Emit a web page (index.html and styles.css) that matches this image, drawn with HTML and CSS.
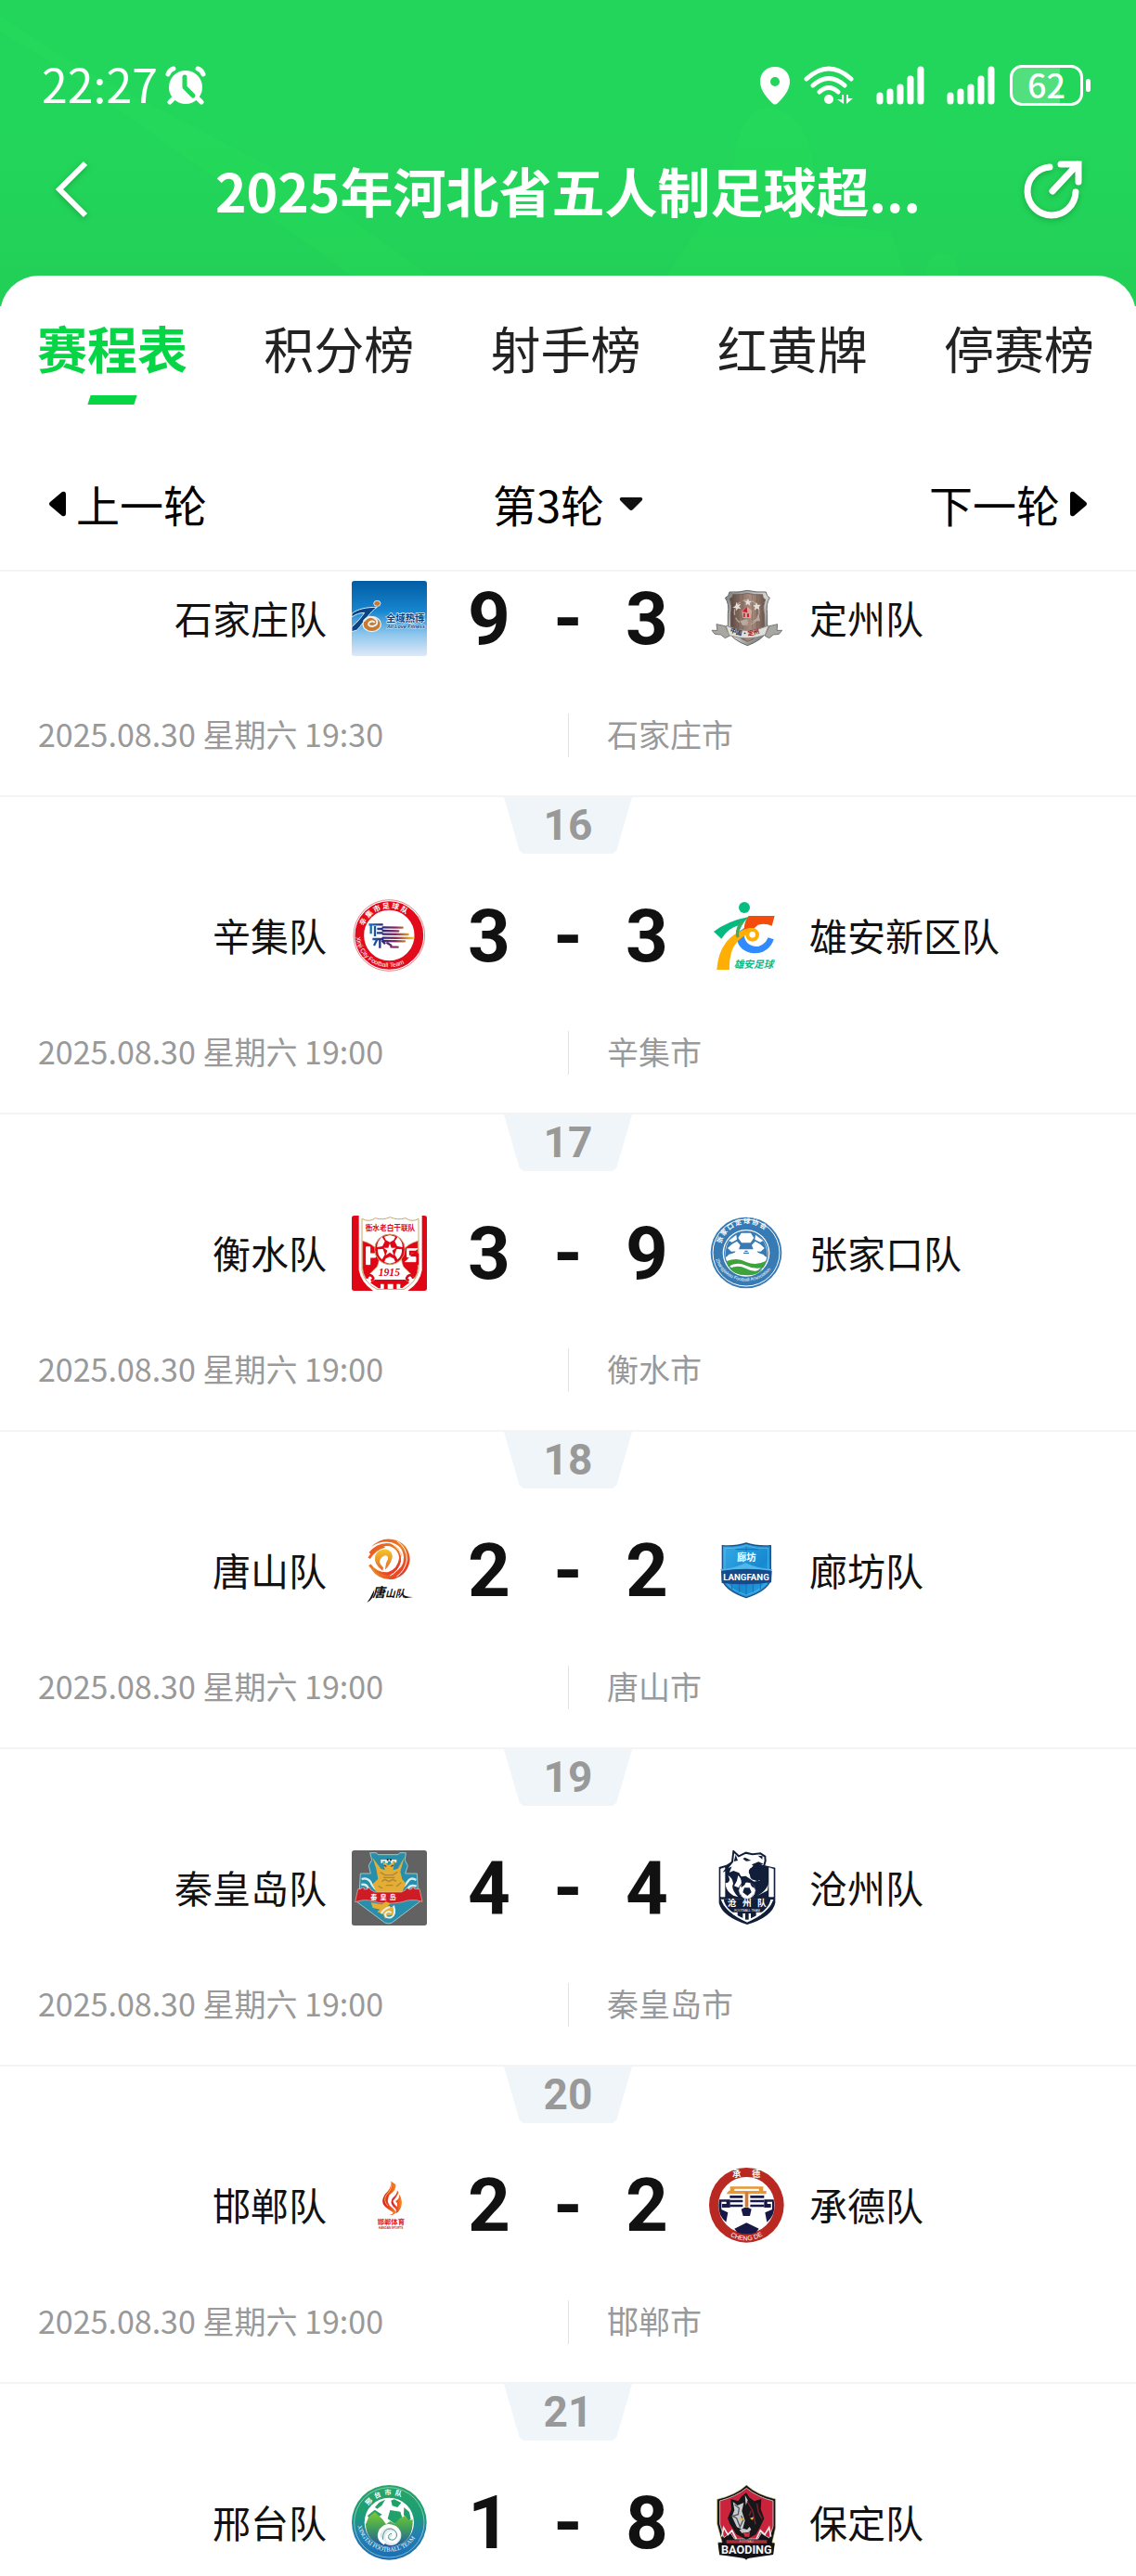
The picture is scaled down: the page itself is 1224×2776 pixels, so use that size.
FILE: index.html
```html
<!DOCTYPE html>
<html lang="zh-CN">
<head>
    <meta charset="UTF-8">
    <meta name="viewport" content="width=device-width, initial-scale=1.0">
    <title>2025年河北省五人制足球超级联赛</title>
    <link rel="stylesheet" href="styles.css">
</head>
<body>
    <div class="app">
        <header class="header">
            <svg class="header-art" viewBox="0 0 1224 340" preserveAspectRatio="xMidYMin slice" aria-hidden="true">
                <path d="M0 18L90 75 330 200 520 340H440L250 205 60 70 0 34Z"/>
                <path d="M790 190Q792 120 828 115 872 122 878 190L872 240 960 250 990 340H690L750 250Z"/>
                <circle cx="1015" cy="290" r="17"/>
            </svg>
            <div class="status-bar">
                <div class="status-left">
                    <span class="time">22:27</span>
                    <svg width="44" height="42" viewBox="0 0 44 42" aria-label="闹钟">
                        <circle cx="22" cy="23" r="18" fill="#fff"/>
                        <path d="M3 9Q5 4 9 3M41 9Q39 4 35 3M9 35L5 39M35 35L39 39" stroke="#fff" stroke-width="5" stroke-linecap="round" fill="none"/>
                        <path d="M21 12V23L30 32" stroke="#23d55b" stroke-width="5" stroke-linecap="round" stroke-linejoin="round" fill="none"/>
                    </svg>
                </div>
                <div class="status-right">
                    <svg width="34" height="42" viewBox="0 0 34 42" aria-label="定位">
                        <path fill="#fff" fill-rule="evenodd" d="M17 1C7 1 1 8 1 17 1 26 8 34 14 40Q17 43 20 40C26 34 33 26 33 17 33 8 27 1 17 1ZM17 12A5 5 0 1 1 17 22 5 5 0 0 1 17 12Z"/>
                    </svg>
                    <svg class="wifi" width="54" height="42" viewBox="0 0 54 42" aria-label="无线网络">
                        <g fill="none" stroke="#fff" stroke-width="5" stroke-linecap="round">
                            <path d="M3 14Q27-8 51 14M10 21Q27 6 44 21M17 28Q27 19 37 28"/>
                        </g>
                        <circle cx="27" cy="36" r="5" fill="#fff"/>
                        <path d="M43 31V41L36 36H41V31ZM46 41V31H48V35H53Z" fill="#fff"/>
                    </svg>
                    <svg class="signal" width="52" height="42" viewBox="0 0 52 42" aria-label="信号">
                        <path d="M4 32V38M15 28V38M26 23V38M37 14V38M48 4V38" stroke="#fff" stroke-width="7" stroke-linecap="round"/>
                    </svg>
                    <svg class="signal" width="52" height="42" viewBox="0 0 52 42" aria-label="信号">
                        <path d="M4 32V38M15 28V38M26 23V38M37 14V38M48 4V38" stroke="#fff" stroke-width="7" stroke-linecap="round"/>
                    </svg>
                    <div class="battery"><span>62</span></div>
                </div>
            </div>
            <div class="title-bar">
                <button class="icon-button" type="button" aria-label="返回">
                    <svg width="38" height="64" viewBox="0 0 38 64">
                        <path d="M34 4L6 32 34 60" fill="none" stroke="#fff" stroke-width="6"/>
                    </svg>
                </button>
                <h1>2025年河北省五人制足球超...</h1>
                <button class="icon-button" type="button" aria-label="分享">
                    <svg width="64" height="64" viewBox="0 0 64 64" fill="none" stroke="#fff" stroke-width="7" stroke-linecap="round">
                        <path d="M29 8A26 26 0 1 0 57 35"/>
                        <path d="M32 34L59 5M41 5H60V24"/>
                    </svg>
                </button>
            </div>
        </header>

        <main class="panel">
            <nav class="tabs">
                <a class="tab active" href="#schedule">赛程表</a>
                <a class="tab" href="#standings">积分榜</a>
                <a class="tab" href="#scorers">射手榜</a>
                <a class="tab" href="#cards">红黄牌</a>
                <a class="tab" href="#suspensions">停赛榜</a>
            </nav>

            <div class="rounds">
                <button class="round-button" type="button">
                    <svg width="20" height="28" viewBox="0 0 20 28"><path d="M2 12L15 1Q19 0 19 4V24Q19 28 15 27L2 16Q0 14 2 12Z"/></svg>
                    上一轮
                </button>
                <div class="round-picker">
                    <select aria-label="轮次">
                        <option>第1轮</option>
                        <option>第2轮</option>
                        <option selected>第3轮</option>
                    </select>
                    <svg width="26" height="16" viewBox="0 0 26 16"><path d="M2 1H24Q26 2 25 4L15 14Q13 16 11 14L1 4Q0 2 2 1Z" fill="#111"/></svg>
                </div>
                <button class="round-button next" type="button">
                    下一轮
                    <svg width="20" height="28" viewBox="0 0 20 28"><path d="M18 12L5 1Q1 0 1 4V24Q1 28 5 27L18 16Q20 14 18 12Z"/></svg>
                </button>
            </div>

            <ul class="match-list">
                <li class="match first">
                    <div class="teams">
                        <div class="team home">
                            <span>石家庄队</span>
                            <svg class="logo" viewBox="57 48 243 243">
                                <defs>
                                    <linearGradient id="sky" x2="0" y2="1">
                                        <stop offset="0" stop-color="#025da3"/>
                                        <stop offset=".4" stop-color="#1785cf"/>
                                        <stop offset=".7" stop-color="#8ac5ec"/>
                                        <stop offset="1" stop-color="#dfe9f8"/>
                                    </linearGradient>
                                </defs>
                                <rect x="57" y="48" width="243" height="243" rx="8" fill="url(#sky)"/>
                                <path d="M57 154C76 138 105 133 139 133 116 147 98 180 74 207L57 212V197C76 181 90 163 98 151 83 151 69 156 57 165Z" fill="#0b4587" stroke="#d6ecfa" stroke-width="3"/>
                                <ellipse cx="122" cy="188" rx="29" ry="24" fill="#c67b34" stroke="#e9f0f4" stroke-width="4"/>
                                <path d="M96 178Q116 153 137 174 145 190 124 195 105 193 114 182 126 174 131 183" fill="none" stroke="#eef1f0" stroke-width="6"/>
                                <ellipse cx="139" cy="121" rx="11" ry="9" fill="#c67b34" stroke="#d6ecfa" stroke-width="3"/>
                                <text x="168" y="181" font-size="31" font-weight="bold" fill="#0d3f7c" stroke="#d6ecfa" stroke-width="4" paint-order="stroke">全域热博</text>
                                <text class="latin" x="171" y="202" font-size="16" font-style="italic" font-weight="bold" fill="#0d3f7c" stroke="#d6ecfa" stroke-width="3" paint-order="stroke">All Love Fitness</text>
                            </svg>
                        </div>
                        <div class="score"><b>9</b><i>-</i><b>3</b></div>
                        <div class="team away">
                            <svg class="logo" viewBox="42 48 243 243">
                                <defs>
                                    <linearGradient id="wood">
                                        <stop offset="0" stop-color="#56443d"/>
                                        <stop offset=".3" stop-color="#8a7064"/>
                                        <stop offset=".6" stop-color="#ab9080"/>
                                        <stop offset="1" stop-color="#685248"/>
                                    </linearGradient>
                                    <linearGradient id="steel" x2="1" y2="1">
                                        <stop offset="0" stop-color="#777"/>
                                        <stop offset=".5" stop-color="#d7d7d4"/>
                                        <stop offset="1" stop-color="#555"/>
                                    </linearGradient>
                                </defs>
                                <path d="M94 103Q107 98 108 84 139 86 166 79 195 86 226 84 227 98 238 103 225 121 230 155V210Q213 240 166 257 118 239 103 210V155Q108 121 94 103Z" fill="url(#steel)" stroke="#666" stroke-width="3"/>
                                <path d="M109 105Q120 102 119 92 145 94 166 88 190 94 215 92 214 104 224 108 214 130 220 157V203Q205 228 166 244 128 229 112 203V157Q118 130 109 105Z" fill="url(#wood)" stroke="#5c5350" stroke-width="2"/>
                                <path d="M137 93V232M151 90V238M181 91V237M197 94V231" stroke="#66534a" stroke-width="2" opacity=".6"/>
                                <circle cx="164" cy="150" r="40" fill="none" stroke="#b3a59c" stroke-width="4" stroke-dasharray="20 9"/>
                                <path d="M131 116L135 125 145 122 139 131 145 138 135 137 130 145 128 136 118 134 127 129ZM168 105L171 113 180 114 173 120 175 128 167 123 160 127 162 119 156 113 164 113ZM195 117L199 125 209 125 203 133 205 141 197 137 189 143 190 133 184 127 192 126Z" fill="#e4dfda"/>
                                <path d="M142 177L151 193 169 185 165 171ZM179 180L194 171 202 153 207 177Z" fill="#b5a9a1"/>
                                <path d="M148 144L165 132 181 144 177 168H151Z" fill="#d3a59b"/>
                                <path d="M149 147L164 132 166 151ZM153 165V152H158V165ZM165 165V154H171V165Z" fill="#c52238"/>
                                <path d="M51 208H69L66 188 94 194 109 225 94 233 80 222 61 220ZM278 208H261L263 188 237 194 222 225 236 233 250 222 268 220Z" fill="#a8a7a4" stroke="#757573" stroke-width="3"/>
                                <path d="M96 192Q164 225 235 192L223 223Q166 243 107 224Z" fill="#e0dfdc" stroke="#8e8d8a" stroke-width="3"/>
                                <path id="dz" d="M109 213Q165 238 220 211" fill="none"/>
                                <text font-size="20" font-weight="bold" fill="#303039"><textPath href="#dz">中国·<tspan fill="#92151e">定州</tspan></textPath></text>
                            </svg>
                            <span>定州队</span>
                        </div>
                    </div>
                    <div class="info"><time>2025.08.30 星期六 19:30</time><span class="place">石家庄市</span></div>
                </li>

                <li class="match">
                    <div class="number">16</div>
                    <div class="teams">
                        <div class="team home">
                            <span>辛集队</span>
                            <svg class="logo" viewBox="57 54 243 243">
                                <defs>
                                    <linearGradient id="speed" gradientUnits="userSpaceOnUse" x1="112" x2="257">
                                        <stop offset="0" stop-color="#1677bf"/>
                                        <stop offset=".3" stop-color="#292a79"/>
                                        <stop offset=".6" stop-color="#8a2861"/>
                                        <stop offset="1" stop-color="#f6cf1a"/>
                                    </linearGradient>
                                </defs>
                                <circle cx="178" cy="174" r="115" fill="#fff" stroke="#e5434c" stroke-width="2"/>
                                <circle cx="178" cy="174" r="96" fill="none" stroke="#e20b1c" stroke-width="29"/>
                                <path id="xjTop" d="M97 144A86 86 0 0 1 261 149" fill="none"/>
                                <path id="xjBottom" d="M71 180A107 107 0 0 0 284 180" fill="none"/>
                                <text font-size="23" font-weight="bold" fill="#fff"><textPath href="#xjTop">辛 集 市 足 球 队</textPath></text>
                                <text class="latin" font-size="20" fill="#fff"><textPath href="#xjBottom">Xinji City Football Team</textPath></text>
                                <g fill="none" stroke="url(#speed)" stroke-width="7">
                                    <path d="M112 139H158M119 139V169M132 144V177M139 153H158M138 166H158M124 186H160M139 187L129 207M148 187V215M155 191L165 202"/>
                                    <path d="M158 148L221 149M158 159L208 160M158 170L239 171M158 182L256 183M158 192L228 193M172 199L184 206M184 211L206 212" stroke-linecap="round"/>
                                </g>
                            </svg>
                        </div>
                        <div class="score"><b>3</b><i>-</i><b>3</b></div>
                        <div class="team away">
                            <svg class="logo" viewBox="1212 54 243 243">
                                <circle cx="1326" cy="84" r="18" fill="#08bd82"/>
                                <path d="M1303 165Q1296 196 1318 217 1346 240 1384 228 1413 214 1421 187L1403 181Q1395 202 1371 210 1341 211 1329 189 1320 166 1334 145Z" fill="#318bff"/>
                                <path d="M1340 111H1424L1415 143Q1393 133 1370 140 1346 158 1347 175 1328 174 1325 154 1326 128 1340 111Z" fill="#f44c0d"/>
                                <path d="M1237 285Q1243 198 1305 165 1330 150 1350 150L1347 166Q1307 180 1289 216 1276 247 1278 285Z" fill="#ffae04"/>
                                <circle cx="1352" cy="172" r="16" fill="#fff" stroke="#ffae04" stroke-width="12"/>
                                <path d="M1227 162Q1270 128 1340 114 1311 142 1303 182 1290 163 1312 140 1272 150 1252 185Z" fill="#06b981"/>
                                <path d="M1305 180Q1299 150 1319 130" fill="none" stroke="#45aa60" stroke-width="9"/>
                                <text x="1292" y="278" font-size="32" font-style="italic" font-weight="bold" fill="#0eb781">雄安足球</text>
                            </svg>
                            <span>雄安新区队</span>
                        </div>
                    </div>
                    <div class="info"><time>2025.08.30 星期六 19:00</time><span class="place">辛集市</span></div>
                </li>

                <li class="match">
                    <div class="number">17</div>
                    <div class="teams">
                        <div class="team home">
                            <span>衡水队</span>
                            <svg class="logo" viewBox="57 60 243 243">
                                <rect x="57" y="60" width="243" height="243" rx="8" fill="#df0715"/>
                                <path d="M80 60H284V236Q278 276 238 303H126Q87 276 80 236Z" fill="#fff"/>
                                <path d="M90 70Q113 83 133 68 156 76 181 65 206 76 231 68 252 83 273 70V238Q263 278 226 298H138Q99 278 90 238Z" fill="#fff" stroke="#c9a76d" stroke-width="3"/>
                                <path d="M92 142Q124 150 142 174 150 200 139 225L102 262Q92 245 92 229ZM271 142Q239 150 221 174 213 200 224 225L261 262Q271 245 271 229Z" fill="#df0715" stroke="#c9a76d" stroke-width="2"/>
                                <path d="M104 161H116V183H134V195H116V218H104ZM270 167H236V194H264V209H229" fill="#fff" stroke="#fff" stroke-width="3"/>
                                <path d="M265 177H246V185H270V219" stroke="#df0715" stroke-width="7" fill="none"/>
                                <circle cx="180" cy="169" r="49" fill="#df0715" stroke="#c9a76d" stroke-width="3"/>
                                <g fill="#fff">
                                    <path d="M180 123L198 128 193 139 180 146 167 139 162 128ZM180 215L198 210 193 199 180 193 167 199 162 210Z"/>
                                    <path d="M155 129L164 143 156 159 139 162Q138 143 155 129ZM205 129L196 143 204 159 221 162Q222 143 205 129ZM141 169L158 168 164 186 155 202Q139 189 141 169ZM219 169L202 168 196 186 205 202Q221 189 219 169Z"/>
                                    <path d="M180 150L185 164H200L188 173 193 188 180 179 167 188 172 173 160 164H175Z"/>
                                </g>
                                <text x="101" y="109" font-size="23" font-weight="bold" fill="#d80b18">衡水老白干联队</text>
                                <text class="serif" x="143" y="256" font-size="35" font-style="italic" font-weight="bold" fill="#df0715">1915</text>
                                <path d="M105 263Q112 246 123 256 132 266 119 270M256 263Q249 246 238 256 229 266 242 270" fill="none" stroke="#df0715" stroke-width="8"/>
                                <path d="M117 277L132 267H230L243 277 220 294H214V281H202V297H191V281H173V297H161V281H150V295H143Z" fill="#df0715"/>
                            </svg>
                        </div>
                        <div class="score"><b>3</b><i>-</i><b>9</b></div>
                        <div class="team away">
                            <svg class="logo" viewBox="1212 60 243 243">
                                <circle cx="1332" cy="180" r="115" fill="#387bb4"/>
                                <circle cx="1332" cy="180" r="108" fill="none" stroke="#fff" stroke-width="3"/>
                                <circle cx="1332" cy="181" r="76" fill="#fff"/>
                                <circle cx="1332" cy="181" r="70" fill="#fff" stroke="#387bb4" stroke-width="4"/>
                                <path d="M1265 195Q1262 137 1307 116L1316 111H1348L1357 116Q1402 137 1399 195 1383 183 1359 179H1304Q1281 183 1265 195Z" fill="#387bb4"/>
                                <path d="M1316 116H1347L1357 132 1346 148H1317L1306 132ZM1300 122L1302 137 1286 146 1276 141ZM1362 122L1360 137 1377 146 1387 141ZM1285 153L1302 143 1313 155 1306 175 1284 176 1272 165ZM1378 153L1361 143 1350 155 1357 175 1379 176 1391 165Z" fill="#fff"/>
                                <path d="M1275 186L1295 180 1300 169H1364L1370 180 1388 186 1398 202H1266Z" fill="#fff"/>
                                <path d="M1323 181H1341M1327 175H1337" stroke="#387bb4" stroke-width="4"/>
                                <path d="M1269 207Q1304 194 1332 210 1364 223 1395 207 1393 221 1388 227 1361 236 1331 221 1302 207 1274 225ZM1278 231Q1306 218 1331 231 1358 246 1384 234 1364 256 1333 252 1297 254 1278 231Z" fill="#3da43c"/>
                                <path id="zjkTop" d="M1251 151A86 86 0 0 1 1418 151" fill="none"/>
                                <path id="zjkBottom" d="M1234 202A103 103 0 0 0 1429 202" fill="none"/>
                                <text font-size="21" font-weight="bold" fill="#fff"><textPath href="#zjkTop">张 家 口 足 球 协 会</textPath></text>
                                <text class="latin" font-size="15" fill="#fff"><textPath href="#zjkBottom">Zhangjiakou Football Association</textPath></text>
                            </svg>
                            <span>张家口队</span>
                        </div>
                    </div>
                    <div class="info"><time>2025.08.30 星期六 19:00</time><span class="place">衡水市</span></div>
                </li>

                <li class="match">
                    <div class="number">18</div>
                    <div class="teams">
                        <div class="team home">
                            <span>唐山队</span>
                            <svg class="logo" viewBox="57 66 243 243">
                                <defs>
                                    <linearGradient id="phoenix" x2="1" y2="1">
                                        <stop offset="0" stop-color="#e94b22"/>
                                        <stop offset=".5" stop-color="#e98223"/>
                                        <stop offset="1" stop-color="#e5192a"/>
                                    </linearGradient>
                                    <linearGradient id="sun" x2="0" y2="1">
                                        <stop offset="0" stop-color="#f7c526"/>
                                        <stop offset="1" stop-color="#df6734"/>
                                    </linearGradient>
                                </defs>
                                <path d="M119 112Q156 74 203 90 244 108 245 153 239 201 193 215 146 221 119 182 154 210 191 195 226 180 225 145 222 105 183 96 147 90 119 112Z" fill="url(#phoenix)"/>
                                <path d="M116 132Q143 99 180 104 212 115 215 147 209 187 175 197 137 200 115 169M113 148Q131 117 163 109" fill="none" stroke="url(#phoenix)" stroke-width="9"/>
                                <path d="M157 188Q126 166 133 138 144 116 171 119 190 126 188 145 184 165 165 185 166 164 174 151 176 139 164 139 148 145 147 160 149 170 159 178Z" fill="url(#sun)"/>
                                <path d="M203 92Q236 113 235 153 230 187 202 207M185 99Q221 122 218 157 210 190 181 204" fill="none" stroke="#fff" stroke-width="3"/>
                                <text class="serif" x="123" y="274" font-size="42" font-style="italic" font-weight="bold" fill="#111">唐<tspan font-size="32">山</tspan><tspan font-size="32">队</tspan></text>
                                <path d="M130 249Q129 279 106 291L116 277ZM216 262Q231 274 256 273L230 277Z" fill="#111"/>
                            </svg>
                        </div>
                        <div class="score"><b>2</b><i>-</i><b>2</b></div>
                        <div class="team away">
                            <svg class="logo" viewBox="1212 66 243 243">
                                <defs>
                                    <linearGradient id="langfang" x2="1" y2="1">
                                        <stop offset="0" stop-color="#37abe7"/>
                                        <stop offset=".6" stop-color="#1789d0"/>
                                        <stop offset="1" stop-color="#31a9e7"/>
                                    </linearGradient>
                                </defs>
                                <path d="M1255 107Q1298 110 1332 99 1366 110 1411 107V219Q1396 254 1332 275 1269 254 1255 219Z" fill="url(#langfang)" stroke="#1e508b" stroke-width="4"/>
                                <path d="M1263 115Q1301 118 1332 107 1365 118 1403 115V217Q1388 249 1332 267 1276 249 1263 217Z" fill="none" stroke="#65c5ef" stroke-width="2"/>
                                <path d="M1298 119H1371M1332 110V125M1286 226V248M1310 230V257M1332 230V266M1354 230V257M1378 226V248" stroke="#1870ad" stroke-width="3"/>
                                <path d="M1248 183Q1292 182 1330 163 1371 182 1417 184L1408 194Q1332 178 1257 193Z" fill="#50b8e9"/>
                                <path d="M1251 188Q1332 176 1415 188L1413 226Q1332 237 1253 228Z" fill="#154a8c"/>
                                <text x="1302" y="157" font-size="31" font-weight="bold" fill="#fff">廊坊</text>
                                <text class="digits" x="1332" y="219" font-size="29" font-weight="bold" text-anchor="middle" fill="#fff">LANGFANG</text>
                            </svg>
                            <span>廊坊队</span>
                        </div>
                    </div>
                    <div class="info"><time>2025.08.30 星期六 19:00</time><span class="place">唐山市</span></div>
                </li>

                <li class="match">
                    <div class="number">19</div>
                    <div class="teams">
                        <div class="team home">
                            <span>秦皇岛队</span>
                            <svg class="logo" viewBox="57 57 243 243">
                                <rect x="57" y="57" width="243" height="243" rx="8" fill="#626262"/>
                                <path d="M116 65H137L141 71H207L212 65H232L229 89 238 107 230 132H268L271 185 278 222 187 291Q176 297 164 291L73 223 82 184 85 132H118L112 106 122 88Z" fill="#278eac" stroke="#9fc6c5" stroke-width="3"/>
                                <path d="M89 150Q106 144 117 158 124 176 143 190M265 153Q247 141 236 161 226 177 202 188M88 168Q106 164 112 184M266 173Q244 165 235 187" stroke="#d6ecef" fill="none" stroke-width="7"/>
                                <path d="M124 80L151 116 164 121 158 93 176 105 195 92 191 121 206 116 227 79 214 126 220 150 232 164 220 193H137L125 166 142 149 136 116Z" fill="#e4ad33"/>
                                <path d="M151 87H202V97H196V92H190V98H183V92H174V98H165V92H157V98H151Z" fill="#f1eee1"/>
                                <path d="M173 84V91M183 84V91" stroke="#222" stroke-width="5"/>
                                <path d="M149 128L164 137H190L205 127M159 145H196M154 157L165 151 177 158 190 151 201 157M167 170H190M143 173L157 180M201 174L217 161" stroke="#a8883e" stroke-width="4" fill="none"/>
                                <path d="M161 105L169 109M184 109L192 105" stroke="#444" stroke-width="4"/>
                                <path d="M77 182H87V178H97V183H107V179H117V184L131 192H218L231 185V180H241V183H250V178H260V182H276L285 223 266 218Q240 215 216 225 178 232 143 226 112 215 88 219L68 224Z" fill="#cd1c25" stroke="#ebb5aa" stroke-width="2"/>
                                <text x="118" y="217" font-size="21" font-weight="bold" fill="#fff">秦 &#160;皇 &#160;岛</text>
                                <path d="M119 226Q143 230 155 232L167 222 182 229 173 238 192 240 198 255Q191 270 174 267L165 278 158 263 139 256 148 248 125 243Z" fill="#e4ad33"/>
                                <path d="M192 236Q202 264 184 274 164 278 165 262 176 249 185 259M180 240Q157 248 153 262" fill="none" stroke="#e3f0ef" stroke-width="6"/>
                            </svg>
                        </div>
                        <div class="score"><b>4</b><i>-</i><b>4</b></div>
                        <div class="team away">
                            <svg class="logo" viewBox="1212 57 243 243">
                                <path d="M1244 111L1268 104 1289 91 1379 103 1426 113V227Q1416 272 1335 297 1254 270 1244 227Z" fill="#111e3a"/>
                                <path d="M1250 117L1263 113V207H1250ZM1406 113L1420 118V207H1406ZM1251 215Q1263 256 1335 289 1407 257 1419 216" fill="#fff" stroke="#fff" stroke-width="2"/>
                                <path d="M1259 215H1411Q1404 256 1335 281 1266 256 1259 215Z" fill="#111e3a"/>
                                <path d="M1291 60L1308 76 1331 65 1352 70 1378 67 1393 77 1394 91 1389 109 1378 105 1357 109 1344 122 1349 145 1375 151 1382 157 1356 161 1330 143 1314 145 1307 132 1291 126 1272 134 1280 115 1265 121 1287 94Z" fill="#fff" stroke="#111e3a" stroke-width="6"/>
                                <path d="M1298 71L1305 90 1292 93ZM1328 80L1348 90 1332 92 1321 84ZM1370 74L1385 76 1384 86ZM1350 103L1372 94 1388 101 1377 104 1357 109Z" fill="#111e3a"/>
                                <path d="M1346 114L1354 134 1374 140 1380 122 1386 126 1383 148 1369 157 1350 151 1340 127Z" fill="#111e3a"/>
                                <path d="M1265 163Q1265 188 1290 203L1306 208Q1281 180 1290 165 1288 146 1273 138 1286 160 1265 163ZM1293 172Q1304 157 1306 138 1324 156 1311 179ZM1404 157Q1404 184 1368 204L1401 187Z" fill="#fff"/>
                                <circle cx="1335" cy="187" r="28" fill="#fff" stroke="#111e3a" stroke-width="3"/>
                                <path d="M1326 178H1343L1349 193 1336 204 1321 193ZM1317 164L1331 160 1327 169 1315 178ZM1344 162L1355 168 1361 181 1350 174ZM1309 193L1316 201 1320 211ZM1359 193L1351 204 1347 212Z" fill="#111e3a"/>
                                <text x="1271" y="237" font-size="29" font-weight="bold" fill="#fff">沧</text>
                                <text x="1320" y="237" font-size="29" font-weight="bold" fill="#fff">州</text>
                                <text x="1368" y="237" font-size="29" font-weight="bold" fill="#fff">队</text>
                                <text class="latin" x="1335" y="255" font-size="10" text-anchor="middle" fill="#fff">FOOTBALL TEAM</text>
                                <path d="M1286 257H1304V271L1290 265ZM1321 261H1347V281L1335 285 1321 279ZM1364 257H1384L1380 265 1364 273Z" fill="#fff"/>
                                <path d="M1329 261H1340V281H1329Z" fill="#111e3a"/>
                            </svg>
                            <span>沧州队</span>
                        </div>
                    </div>
                    <div class="info"><time>2025.08.30 星期六 19:00</time><span class="place">秦皇岛市</span></div>
                </li>

                <li class="match">
                    <div class="number">20</div>
                    <div class="teams">
                        <div class="team home">
                            <span>邯郸队</span>
                            <svg class="logo" viewBox="57 63 243 243">
                                <defs>
                                    <linearGradient id="flame">
                                        <stop offset="0" stop-color="#d51a29"/>
                                        <stop offset=".6" stop-color="#ed5522"/>
                                        <stop offset="1" stop-color="#f89023"/>
                                    </linearGradient>
                                </defs>
                                <path d="M184 107Q187 128 164 149 149 174 164 188 174 197 190 207 193 213 178 216 195 217 201 206 193 195 180 186 168 171 179 151 203 134 199 117Z" fill="url(#flame)"/>
                                <path d="M204 136Q204 149 191 159 178 173 191 189 205 198 199 211 217 202 219 176 217 156 210 149 212 166 198 171 207 177 203 190 193 182 190 171 206 153 208 143Z" fill="url(#flame)"/>
                                <path d="M184 107Q191 130 169 151 157 170 174 186" fill="none" stroke="#f8bd28" stroke-width="3"/>
                                <text x="140" y="246" font-size="22" font-weight="bold" fill="#d91a22">邯郸体育</text>
                                <text class="latin" x="144" y="260" font-size="9" font-weight="bold" fill="#d91a22">HANDAN SPORTS</text>
                            </svg>
                        </div>
                        <div class="score"><b>2</b><i>-</i><b>2</b></div>
                        <div class="team away">
                            <svg class="logo" viewBox="1212 63 243 243">
                                <circle cx="1333" cy="184" r="121" fill="#b92922"/>
                                <circle cx="1333" cy="184" r="91" fill="#fff"/>
                                <path d="M1245 166H1280V192H1254V180H1268V173H1252V198L1273 208 1267 239Q1242 220 1243 184ZM1421 166H1390V192H1412V180H1400V173H1416V198L1393 208 1399 239Q1424 220 1423 184Z" fill="#181847"/>
                                <path d="M1316 197L1332 189 1349 197 1344 219H1322ZM1333 241L1373 260 1363 273Q1334 282 1304 273L1294 260Z" fill="#181847"/>
                                <path d="M1279 157H1390M1279 171H1390M1279 186H1390" stroke="#181847" stroke-width="8"/>
                                <path d="M1321 150H1345V192H1321Z" fill="#fff"/>
                                <path d="M1280 124H1387V138H1397V148H1268L1276 137H1280ZM1294 131V138H1373V131Z" fill="#e99733" fill-rule="evenodd"/>
                                <path d="M1328 142H1339V191H1328Z" fill="#d77930"/>
                                <text x="1288" y="93" font-size="27" font-weight="bold" fill="#fff">承</text>
                                <text x="1351" y="93" font-size="27" font-weight="bold" fill="#fff">德</text>
                                <path id="cdBottom" d="M1280 284Q1332 314 1386 282" fill="none"/>
                                <text class="latin" font-size="21" fill="#fff"><textPath href="#cdBottom">CHENG DE</textPath></text>
                            </svg>
                            <span>承德队</span>
                        </div>
                    </div>
                    <div class="info"><time>2025.08.30 星期六 19:00</time><span class="place">邯郸市</span></div>
                </li>

                <li class="match">
                    <div class="number">21</div>
                    <div class="teams">
                        <div class="team home">
                            <span>邢台队</span>
                            <svg class="logo" viewBox="57 354 243 243">
                                <defs>
                                    <linearGradient id="ring" x2="0" y2="1">
                                        <stop offset="0" stop-color="#29a567"/>
                                        <stop offset=".4" stop-color="#1b9d76"/>
                                        <stop offset=".65" stop-color="#2380b1"/>
                                        <stop offset="1" stop-color="#1b6eb2"/>
                                    </linearGradient>
                                    <linearGradient id="hill" x2="0" y2="1">
                                        <stop offset="0" stop-color="#82c735"/>
                                        <stop offset=".4" stop-color="#47a653"/>
                                        <stop offset="1" stop-color="#2056a3"/>
                                    </linearGradient>
                                </defs>
                                <circle cx="178" cy="475" r="121" fill="url(#ring)"/>
                                <circle cx="178" cy="475" r="113" fill="none" stroke="#b4ddd5" stroke-width="2"/>
                                <circle cx="178" cy="475" r="80" fill="#fff"/>
                                <path d="M184 404L194 400 217 411 205 426 188 421ZM181 435L214 440 222 465 196 479 173 463ZM132 425L146 410 165 401 154 420 139 431ZM155 449L131 434 108 453 119 474ZM226 426L243 441 248 464 238 472 225 450Z" fill="#20a16a"/>
                                <path d="M102 481L112 457 132 441 157 465 168 481 181 471 196 479 212 462 230 453 241 468 254 466Q256 529 211 547 178 563 143 546 103 527 102 481Z" fill="url(#hill)"/>
                                <circle cx="184" cy="516" r="33" fill="#e4ecee"/>
                                <path d="M164 543Q136 527 151 499 172 475 198 492 219 514 198 535 172 542 171 520 178 502 193 511 198 524 184 526" stroke="#fff" stroke-width="10" fill="none"/>
                                <path d="M157 530Q157 493 184 495 206 502 202 521 193 538 177 528 172 513 186 511" stroke="#55918b" stroke-width="3" fill="none"/>
                                <path id="xtTop" d="M111 421A86 86 0 0 1 251 421" fill="none"/>
                                <path id="xtBottom" d="M77 486A103 103 0 0 0 279 486" fill="none"/>
                                <text font-size="22" font-weight="bold" fill="#fff"><textPath href="#xtTop">邢&#160; 台&#160; 市&#160; 队</textPath></text>
                                <text class="serif" font-size="19" fill="#fff"><textPath href="#xtBottom">XINGTAI FOOTBALL TEAM</textPath></text>
                            </svg>
                        </div>
                        <div class="score"><b>1</b><i>-</i><b>8</b></div>
                        <div class="team away">
                            <svg class="logo" viewBox="1212 354 243 243">
                                <path d="M1333 354Q1368 386 1427 399V492L1416 540H1424L1419 578 1348 584 1332 596 1316 584 1246 580 1241 539H1254L1238 480V400Q1299 386 1333 354Z" fill="#121215" stroke="#ddd286" stroke-width="2"/>
                                <path d="M1333 364Q1371 394 1419 405V488L1406 525 1381 509 1370 528H1294L1281 508 1260 524 1247 480V405Q1300 391 1333 364Z" fill="#ca233b" stroke="#b9b9bb" stroke-width="3"/>
                                <path d="M1282 399L1306 406 1317 391 1332 379 1342 394 1358 406 1381 399 1379 431 1390 462 1376 492 1363 514 1333 530 1300 513 1279 479 1272 461 1284 433Z" fill="#17171a"/>
                                <path d="M1289 408L1304 420 1324 411 1318 438 1328 469 1320 498 1302 490 1286 456 1294 435ZM1328 386L1337 403 1331 419ZM1310 499L1323 495 1335 498 1343 489 1348 498 1339 507 1318 509Z" fill="#c8cbce"/>
                                <path d="M1295 417L1309 429 1306 449 1288 454 1301 461 1312 489 1322 467 1316 453" fill="none" stroke="#54565b" stroke-width="4"/>
                                <path d="M1307 460L1324 463 1318 470ZM1344 461L1358 456 1352 467Z" fill="#f2bf38"/>
                                <path d="M1336 408L1353 437 1362 481M1367 414L1371 440 1383 463M1348 437L1342 453" stroke="#84202d" stroke-width="4" fill="none"/>
                                <path d="M1321 506L1328 521H1342L1345 502 1336 511Z" fill="#cf3040"/>
                                <path d="M1253 521L1259 491 1273 514 1286 501 1300 528M1412 521L1406 491 1392 514 1378 501 1365 528" fill="none" stroke="#eee" stroke-width="5"/>
                                <path d="M1268 532H1399V542H1268Z" fill="#a82c39"/>
                                <text class="latin" x="1334" y="541" font-size="9" text-anchor="middle" fill="#f0b3b8">FOOTBALL</text>
                                <path d="M1241 543H1424L1419 579 1332 592 1246 579Z" fill="#111217"/>
                                <text class="digits" x="1333" y="577" font-size="38" font-weight="bold" text-anchor="middle" fill="#f4f5f9">BAODING</text>
                            </svg>
                            <span>保定队</span>
                        </div>
                    </div>
                </li>
            </ul>
        </main>
    </div>
</body>
</html>
```

FILE: styles.css
```css
* {
    box-sizing: border-box;
    margin: 0;
    padding: 0;
}

body {
    background-color: #fff;
    color: #111;
    font-family: "Noto Sans CJK SC", "Noto Sans", sans-serif;
}

button, select {
    border: none;
    background: none;
    color: inherit;
    font: inherit;
    cursor: pointer;
}

svg {
    display: block;
    flex: none;
}

.app {
    display: flex;
    flex-direction: column;
    height: 100vh;
    overflow: hidden;
}

/* Header */
.header {
    position: relative;
    flex: none;
    padding: 60px 50px 84px 45px;
    background: linear-gradient(#23d65b 0%, #22d65b 45%, #22cf57 100%);
    color: #fff;
}

.header-art {
    position: absolute;
    top: 0;
    left: 0;
    width: 100%;
    height: 100%;
    fill: rgba(40, 232, 88, 0.14);
}

.status-bar, .title-bar {
    position: relative;
    display: flex;
    align-items: center;
    justify-content: space-between;
}

.status-bar {
    height: 64px;
}

.status-left, .status-right {
    display: flex;
    align-items: center;
}

.status-left {
    gap: 8px;
}

.time {
    padding-bottom: 6px;
    font-size: 50px;
    line-height: 58px;
}

.wifi {
    margin-left: 14px;
}

.signal {
    margin-left: 24px;
}

.battery {
    position: relative;
    width: 79px;
    height: 44px;
    margin-left: 16px;
    margin-right: 7px;
    border: 3px solid #fff;
    border-radius: 13px;
    background: linear-gradient(to right, #52df7d 70%, transparent 70%);
    font-size: 36px;
    font-weight: 500;
    line-height: 34px;
    text-align: center;
}

.battery::after {
    content: "";
    position: absolute;
    top: 12px;
    right: -11px;
    width: 5px;
    height: 14px;
    border-radius: 3px;
    background-color: #fff;
}

.title-bar {
    height: 84px;
    margin-top: 38px;
    padding: 0 8px 0 13px;
}

.title-bar h1 {
    font-size: 57px;
    font-weight: bold;
    line-height: 84px;
}

.icon-button {
    width: 64px;
}

.icon-button svg {
    filter: drop-shadow(0 2px 3px rgba(0, 80, 20, 0.3));
}

/* White panel with tabs */
.panel {
    position: relative;
    display: flex;
    flex: 1;
    flex-direction: column;
    min-height: 0;
    margin-top: -33px;
    border-radius: 42px 42px 0 0;
    background-color: #fff;
}

.tabs {
    display: flex;
    justify-content: space-between;
    padding: 48px 45px 0 40px;
}

.tab {
    color: #222;
    font-size: 54px;
    line-height: 60px;
    text-decoration: none;
}

.tab::after {
    content: "";
    display: block;
    width: 50px;
    height: 10px;
    margin: 21px auto 0;
}

.tab.active {
    color: #06d645;
    font-weight: bold;
}

.tab.active::after {
    background-color: #06d645;
    transform: skewX(-18deg);
}

/* Round switcher */
.rounds {
    display: grid;
    grid-template-columns: 1fr auto 1fr;
    align-items: center;
    padding: 77px 52px 41px;
    color: #000;
    font-size: 47px;
    line-height: 60px;
}

.round-button, .round-picker {
    display: flex;
    align-items: center;
}

.round-button {
    gap: 10px;
    justify-self: start;
}

.round-button.next {
    justify-self: end;
}

.round-picker {
    gap: 15px;
}

.round-picker select {
    appearance: none;
}

/* Matches */
.match-list {
    flex: 1;
    min-height: 0;
    overflow: hidden;
    list-style: none;
}

.match {
    border-top: 2px solid #f4f4f5;
}

.match.first {
    padding-top: 10px;
}

.number {
    width: 138px;
    height: 61px;
    margin: 0 auto 48px;
    background-color: #eff5f8;
    clip-path: polygon(0 0, 100% 0, 88% 94%, 85% 100%, 15% 100%, 12% 94%);
    color: #999;
    font-family: Roboto, "Liberation Sans", sans-serif;
    font-size: 46px;
    font-weight: bold;
    line-height: 61px;
    text-align: center;
}

.teams {
    display: grid;
    grid-template-columns: 1fr 304px 1fr;
    align-items: center;
}

.team {
    display: flex;
    align-items: center;
    gap: 27px;
    font-size: 41px;
    line-height: 60px;
    white-space: nowrap;
}

.team span {
    padding-bottom: 4px;
}

.team.home {
    justify-content: flex-end;
}

.logo {
    width: 81px;
    height: 81px;
}

.logo .latin {
    font-family: "Liberation Sans", sans-serif;
}

.logo .digits {
    font-family: Roboto, "Liberation Sans", sans-serif;
}

.logo .serif {
    font-family: "Liberation Serif", "Noto Sans CJK SC", serif;
}

.score {
    display: grid;
    grid-template-columns: 85px 85px 85px;
    justify-content: center;
    font-family: Roboto, "Liberation Sans", sans-serif;
    font-size: 80px;
    line-height: 80px;
    text-align: center;
}

.score b, .score i {
    font-style: normal;
    font-weight: bold;
}

.info {
    display: grid;
    grid-template-columns: 1fr 1fr;
    margin: 62px 0 41px;
    color: #999;
    font-size: 34px;
    line-height: 43px;
}

.info time {
    padding: 0 0 4px 41px;
}

.place {
    padding: 0 0 4px 41px;
    border-left: 1px solid #e3e3e3;
}
```
